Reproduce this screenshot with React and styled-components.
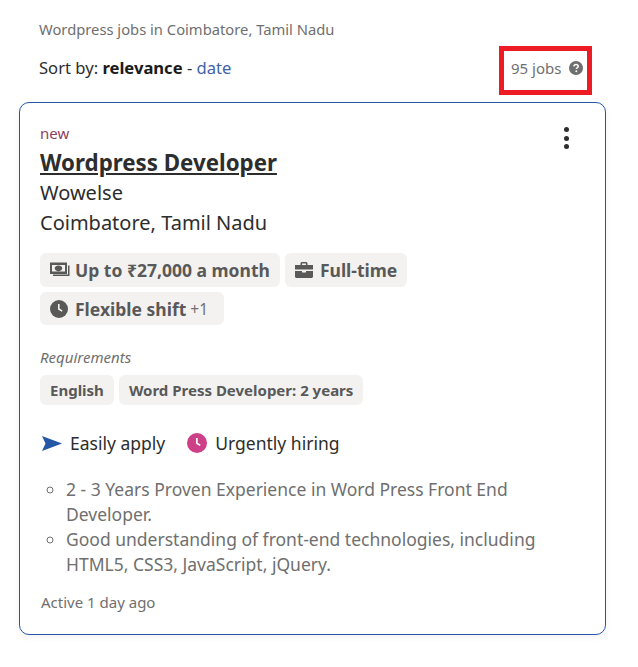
import React from 'react';
import styled, { createGlobalStyle } from 'styled-components';

const GlobalStyle = createGlobalStyle`
	body {
		margin: 0;
		background: #fff;
		font-family: 'Noto Sans', 'Liberation Sans', sans-serif;
		color: #2d2d2d;
	}
`;

export default function App() {
	return (
		<Page>
			<GlobalStyle />
			<SearchTitle>Wordpress jobs in Coimbatore, Tamil Nadu</SearchTitle>
			<SortRow>
				<SortBy>
					Sort by: <b>relevance</b> - <SortLink>date</SortLink>
				</SortBy>
				<JobCount>
					95 jobs
					<svg width='14' height='14' viewBox='0 0 14 14'>
						<circle cx='7' cy='7' r='7' fill='#6f6f6f' />
						<path
							d='M4.9 5.4C5 4.1 5.9 3.4 7.1 3.4c1.2 0 2.1.7 2.1 1.8 0 .9-.5 1.3-1.1 1.7-.5.3-.7.6-.7 1.1'
							fill='none'
							stroke='#fff'
							strokeWidth='1.5'
						/>
						<circle cx='7.3' cy='10.3' r='.95' fill='#fff' />
					</svg>
				</JobCount>
			</SortRow>
			<Card>
				<MoreButton>
					<Dot />
					<Dot />
					<Dot />
				</MoreButton>
				<NewLabel>new</NewLabel>
				<JobTitle>Wordpress Developer</JobTitle>
				<CompanyLine>Wowelse</CompanyLine>
				<CompanyLine>Coimbatore, Tamil Nadu</CompanyLine>
				<ChipGroup>
					<Chip>
						<svg width='20' height='18' viewBox='0 0 20 18'>
							<path
								fillRule='evenodd'
								d='M0 1.5h17v11.5H0zM2 4v6.5h13V4zM8.5 4.4c2.1 0 3.8 1.3 3.8 2.9s-1.700 2.900-3.800 2.900-3.800-1.300-3.800-2.900 1.700-2.900 3.800-2.900z'
								fill='#595959'
							/>
							<circle cx='8.5' cy='7.3' r='1.6' fill='#595959' />
							<path d='M18 4.5h1.5V15H3v-1.5h15z' fill='#595959' />
						</svg>
						Up to ₹27,000 a month
					</Chip>
					<Chip $gap='7px'>
						<svg width='18' height='16' viewBox='0 0 18 16'>
							<path
								fillRule='evenodd'
								d='M5.5 3V1.6C5.5.7 6.2 0 7 0h4c.8 0 1.5.7 1.5 1.6V3H18v4.500H0V3zM7 1.500V3h4V1.500zM0 9h7v1.500h4V9h7v5.500c0 .8-.7 1.500-1.500 1.500h-15C.7 16 0 15.300 0 14.500z'
								fill='#595959'
							/>
						</svg>
						Full-time
					</Chip>
					<Chip $gap='7px' $short>
						<svg width='18' height='18' viewBox='0 0 18 18'>
							<circle cx='9' cy='9' r='9' fill='#595959' />
							<path d='M8 4h1.600v4.600l3 1.900-.8 1.300L8 9.500z' fill='#f3f2f1' />
						</svg>
						Flexible shift
						<ChipMore>+1</ChipMore>
					</Chip>
				</ChipGroup>
				<RequirementsLabel>Requirements</RequirementsLabel>
				<TagGroup>
					<Tag>English</Tag>
					<Tag>Word Press Developer: 2 years</Tag>
				</TagGroup>
				<PerkRow>
					<Perk>
						<svg width='20' height='15' viewBox='0 0 20 15'>
							<path d='M0 0l20 7.500L0 15l3.500-7.500z' fill='#2557a7' />
						</svg>
						Easily apply
					</Perk>
					<Perk>
						<svg width='20' height='20' viewBox='0 0 20 20'>
							<circle cx='10' cy='10' r='10' fill='#cd3f87' />
							<path d='M9 5h1.700v4.800l3 1.900-.9 1.300L9 10.700z' fill='#fff' />
						</svg>
						Urgently hiring
					</Perk>
				</PerkRow>
				<SnippetList>
					<li>2 - 3 Years Proven Experience in Word Press Front End Developer.</li>
					<li>
						Good understanding of front-end technologies, including HTML5, CSS3,
						JavaScript, jQuery.
					</li>
				</SnippetList>
				<Footer>Active 1 day ago</Footer>
			</Card>
		</Page>
	);
}

const Page = styled.div`
	width: 638px;
	height: 667px;
	box-sizing: border-box;
	padding: 19px 32px 0 19px;
	overflow: hidden;
`;

const SearchTitle = styled.div`
	margin-left: 20px;
	font-size: 14.75px;
	line-height: 20px;
	color: #6f6f6f;
`;

const SortRow = styled.div`
	display: flex;
	justify-content: space-between;
	align-items: center;
	height: 49px;
	margin: 7px 14px 7px 20px;
`;

const SortBy = styled.div`
	font-size: 16.6px;
	line-height: 24px;
	color: #2d2d2d;
	margin-top: -5px;

	b {
		font-weight: 700;
		color: #1a1a1a;
	}
`;

const SortLink = styled.span`
	color: #3f64a8;
`;

const JobCount = styled.div`
	display: flex;
	align-items: center;
	gap: 8px;
	box-sizing: border-box;
	width: 93px;
	height: 49px;
	padding: 0 0 5px 7px;
	border: 5px solid #ed1c24;
	font-size: 15px;
	white-space: nowrap;
	color: #6f6f6f;
`;

const Card = styled.div`
	position: relative;
	box-sizing: border-box;
	width: 587px;
	height: 533px;
	padding: 20px 20px 0 20px;
	border: 1px solid #2557a7;
	border-radius: 10px;
	box-shadow: 0 2px 6px rgba(0, 0, 0, 0.06);
`;

const MoreButton = styled.div`
	position: absolute;
	top: 24px;
	right: 36px;
	display: flex;
	flex-direction: column;
	gap: 3.700px;
`;

const Dot = styled.span`
	width: 5px;
	height: 5px;
	border-radius: 50%;
	background: #2d2d2d;
`;

const NewLabel = styled.div`
	font-size: 15px;
	line-height: 20px;
	color: #8f3f5f;
`;

const JobTitle = styled.div`
	margin-top: 5px;
	font-size: 22.3px;
	line-height: 30px;
	font-weight: 700;
	text-decoration: underline;
	color: #2d2d2d;
`;

const CompanyLine = styled.div`
	font-size: 20px;
	line-height: 30px;
	color: #2d2d2d;
`;

const ChipGroup = styled.div`
	display: flex;
	flex-wrap: wrap;
	gap: 5px;
	margin-top: 15px;
	width: 420px;
`;

const Chip = styled.div`
	display: flex;
	align-items: center;
	gap: ${props => props.$gap || '5px'};
	box-sizing: border-box;
	height: ${props => (props.$short ? '33px' : '34px')};
	padding: 0 ${props => (props.$short ? '16px' : '10px')} 0 10px;
	border-radius: 6px;
	background: #f3f2f1;
	font-size: 17.5px;
	font-weight: 700;
	color: #595959;
`;

const ChipMore = styled.span`
	margin-left: -3px;
	font-size: 15.5px;
	font-weight: 400;
	color: #6f6f6f;
`;

const RequirementsLabel = styled.div`
	margin-top: 22px;
	font-size: 15px;
	line-height: 20px;
	font-style: italic;
	color: #6f6f6f;
`;

const TagGroup = styled.div`
	display: flex;
	gap: 5px;
	margin-top: 8px;
`;

const Tag = styled.div`
	display: flex;
	align-items: center;
	height: 30px;
	padding: 0 10px;
	border-radius: 6px;
	background: #f3f2f1;
	font-size: 15px;
	font-weight: 700;
	color: #595959;
`;

const PerkRow = styled.div`
	display: flex;
	gap: 20px;
	margin-top: 23px;
	height: 30px;
	align-items: center;
`;

const Perk = styled.div`
	display: flex;
	align-items: center;
	gap: 8px;
	margin-left: 2px;
	font-size: 17.5px;
	color: #2d2d2d;
`;

const SnippetList = styled.ul`
	margin: 19px 0 0;
	padding: 0 30px 0 26px;
	list-style-type: circle;
	font-size: 17.5px;
	line-height: 25px;
	color: #6f6f6f;
`;

const Footer = styled.div`
	margin-top: 15px;
	margin-left: 1px;
	font-size: 15px;
	line-height: 20px;
	color: #6f6f6f;
`;
